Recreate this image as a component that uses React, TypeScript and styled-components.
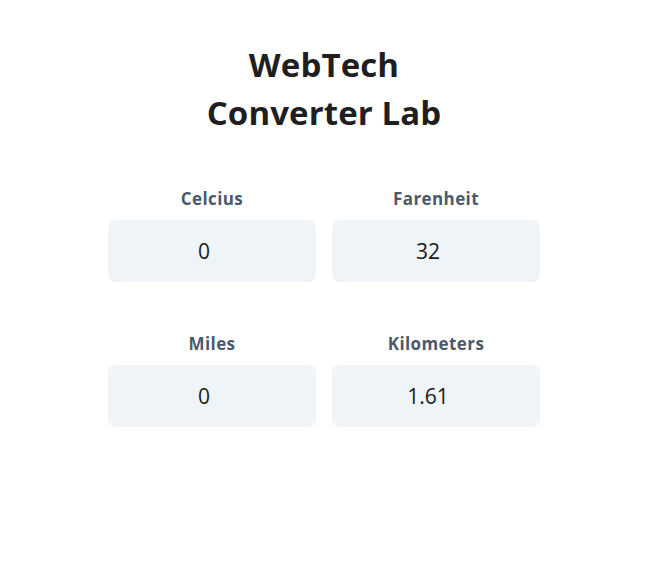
import React, { useState } from "react";
import styled, { createGlobalStyle } from "styled-components";

const Global = createGlobalStyle`
  html, body { margin: 0; padding: 0; background: #ffffff; }
  body { font-family: "Open Sans", "Noto Sans", sans-serif; }
`;

const Page = styled.main`
  width: 648px;
  display: flex;
  flex-direction: column;
  align-items: center;
  padding-top: 41px;
`;

const Title = styled.h1`
  margin: 0 0 52px;
  font-size: 33px;
  line-height: 48px;
  font-weight: 700;
  color: #1f1f1f;
  text-align: center;
  letter-spacing: 0.1px;
`;

const Rows = styled.div`
  display: flex;
  flex-direction: column;
  gap: 52px;
`;

const Row = styled.div`
  display: grid;
  grid-template-columns: 208px 208px;
  column-gap: 16px;
`;

const Field = styled.label`
  display: flex;
  flex-direction: column;
  align-items: center;
  gap: 11px;
`;

const Label = styled.span`
  font-size: 17px;
  line-height: 20px;
  font-weight: 700;
  color: #4b5a6b;
  letter-spacing: 0.4px;
`;

const Input = styled.input`
  box-sizing: border-box;
  width: 208px;
  height: 62px;
  padding: 0 16px 0 0;
  border: none;
  border-radius: 8px;
  background: #eff4f8;
  font-family: inherit;
  font-size: 21px;
  color: #1a1a1a;
  text-align: center;
  outline: none;
`;

export default function App() {
  const [c, setC] = useState("0");
  const [f, setF] = useState("32");
  const [mi, setMi] = useState("0");
  const [km, setKm] = useState("1.61");
  return (
    <>
      <Global />
      <Page>
        <Title>
          WebTech
          <br />
          Converter Lab
        </Title>
        <Rows>
          <Row>
            <Field>
              <Label>Celcius</Label>
              <Input value={c} onChange={(e) => setC(e.target.value)} />
            </Field>
            <Field>
              <Label>Farenheit</Label>
              <Input value={f} onChange={(e) => setF(e.target.value)} />
            </Field>
          </Row>
          <Row>
            <Field>
              <Label>Miles</Label>
              <Input value={mi} onChange={(e) => setMi(e.target.value)} />
            </Field>
            <Field>
              <Label>Kilometers</Label>
              <Input value={km} onChange={(e) => setKm(e.target.value)} />
            </Field>
          </Row>
        </Rows>
      </Page>
    </>
  );
}
